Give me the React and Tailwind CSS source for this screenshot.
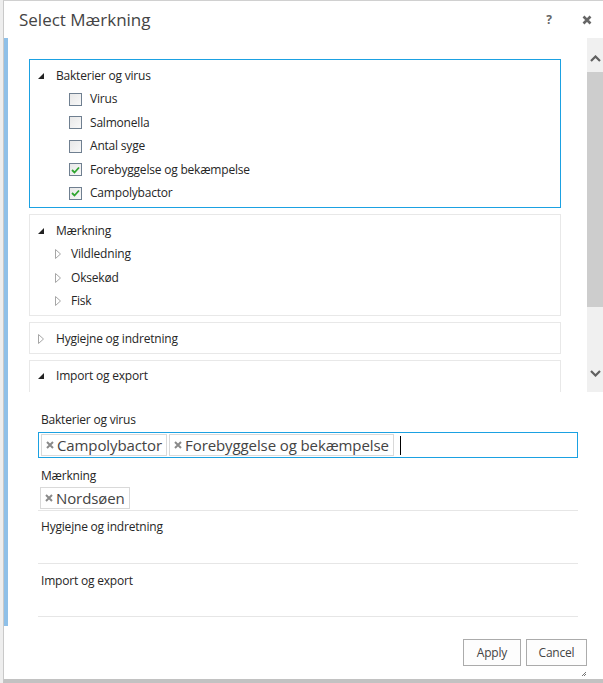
import React from 'react';

const FONT = { fontFamily: '"Open Sans", "Noto Sans", Arial, sans-serif' };

function Expanded() {
    return (
        <svg width="6" height="6" viewBox="0 0 6 6" className="shrink-0">
            <path d="M6 0 L6 6 L0 6 Z" fill="#222" />
        </svg>
    );
}

function Collapsed() {
    return (
        <svg width="6" height="10" viewBox="0 0 6 10" className="shrink-0">
            <path d="M0.5 0.5 L5.5 5 L0.5 9.5 Z" fill="none" stroke="#a6a6a6" strokeWidth="1" />
        </svg>
    );
}

function Checkbox({ checked }) {
    return (
        <span className="w-[13px] h-[13px] shrink-0 border border-[#6f7f90] bg-gradient-to-br from-[#e8e8e8] to-[#f8f8f8] flex items-center justify-center">
            {checked && (
                <svg width="9" height="8" viewBox="0 0 9 8">
                    <path d="M1 4 L3.5 6.5 L8 1.5" fill="none" stroke="#2fa52f" strokeWidth="1.8" />
                </svg>
            )}
        </span>
    );
}

function Tag({ label }) {
    return (
        <span className="h-[22px] flex items-center gap-[3px] px-[4px] border border-[#d9d9d9] text-[15px] tracking-[-0.1px] text-[#444] leading-none">
            <svg width="8" height="8" viewBox="0 0 8 8">
                <path d="M1 1 L7 7 M7 1 L1 7" stroke="#8a8a8a" strokeWidth="2" />
            </svg>
            {label}
        </span>
    );
}

const bacteria = [
    { name: 'Virus', checked: false },
    { name: 'Salmonella', checked: false },
    { name: 'Antal syge', checked: false },
    { name: 'Forebyggelse og bekæmpelse', checked: true },
    { name: 'Campolybactor', checked: true },
];

export default function App() {
    return (
        <div className="w-[603px] h-[683px] flex bg-[#e4e4e4] overflow-hidden relative" style={FONT}>
            <div className="w-[3px] bg-[#eeeeee]" />
            <div className="flex-1 flex flex-col bg-white border-l border-t border-b-[4px] border-l-[#c9c9c9] border-t-[#d0d0d0] border-b-[#c2c2c2] relative">
                {/* page behind, peeking through */}
                <div className="absolute left-0 top-[37px] w-[4px] h-[588px] bg-[#8fc0e8]" />

                {/* title bar */}
                <div className="h-[37px] flex items-center pl-[15px] pr-[8px]">
                    <h1 className="text-[17px] text-[#444] flex-1 pt-[1px]">Select Mærkning</h1>
                    <span className="text-[12px] font-bold text-[#666] mr-[30px]">?</span>
                    <svg width="10" height="10" viewBox="0 0 10 10" className="mr-[3px]">
                        <path d="M1.5 1.5 L8.5 8.5 M8.5 1.5 L1.5 8.5" stroke="#666" strokeWidth="2.6" />
                    </svg>
                </div>

                {/* scrollable tree */}
                <div className="h-[354px] flex">
                    <div className="flex-1 overflow-hidden pl-[25px] pr-[26px] pt-[21px] flex flex-col gap-[6px] text-[12px] tracking-[-0.2px] text-[#262626]">
                        {/* Bakterier og virus */}
                        <section className="border border-[#1ba1e2] pt-[4px] pb-[2px] shrink-0">
                            <div className="h-[23.5px] flex items-center pl-[8px] gap-[12px]">
                                <Expanded />
                                <span>Bakterier og virus</span>
                            </div>
                            {bacteria.map((b) => (
                                <div key={b.name} className="h-[23.5px] flex items-center pl-[39px] gap-[8px]">
                                    <Checkbox checked={b.checked} />
                                    <span>{b.name}</span>
                                </div>
                            ))}
                        </section>

                        {/* Mærkning */}
                        <section className="border border-[#e8e8e8] pt-[4px] pb-[2px] shrink-0">
                            <div className="h-[23.5px] flex items-center pl-[8px] gap-[12px]">
                                <Expanded />
                                <span>Mærkning</span>
                            </div>
                            {['Vildledning', 'Oksekød', 'Fisk'].map((n) => (
                                <div key={n} className="h-[23.5px] flex items-center pl-[25px] gap-[10px]">
                                    <Collapsed />
                                    <span>{n}</span>
                                </div>
                            ))}
                        </section>

                        <section className="border border-[#e8e8e8] pt-[4px] pb-[2px] shrink-0">
                            <div className="h-[23.5px] flex items-center pl-[8px] gap-[12px]">
                                <Collapsed />
                                <span>Hygiejne og indretning</span>
                            </div>
                        </section>

                        <section className="border border-[#e8e8e8] pt-[4px] pb-[2px] shrink-0">
                            <div className="h-[23.5px] flex items-center pl-[8px] gap-[12px]">
                                <Expanded />
                                <span>Import og export</span>
                            </div>
                            <div className="h-[23.5px]" />
                        </section>
                    </div>

                    {/* scrollbar */}
                    <div className="w-[16px] bg-[#f0f0f0] flex flex-col items-center">
                        <div className="h-[34px] flex items-center justify-center pt-[6px]">
                            <svg width="11" height="7" viewBox="0 0 11 7">
                                <path d="M1 6 L5.5 1.5 L10 6" fill="none" stroke="#606060" strokeWidth="2.2" />
                            </svg>
                        </div>
                        <div className="w-full h-[235px] bg-[#cdcdcd]" />
                        <div className="flex-1 flex items-end pb-[15px]">
                            <svg width="11" height="7" viewBox="0 0 11 7">
                                <path d="M1 1 L5.5 5.5 L10 1" fill="none" stroke="#606060" strokeWidth="2.2" />
                            </svg>
                        </div>
                    </div>
                </div>

                {/* selection summary */}
                <div className="pl-[34px] pr-[25px] pt-[18px] text-[12px] tracking-[-0.2px] text-[#262626]">
                    <div className="h-[19px] flex items-center pl-[3px]">Bakterier og virus</div>
                    <div className="h-[26px] mt-[3px] border border-[#1ba1e2] flex items-center gap-[2px] pl-[2px]">
                        <Tag label="Campolybactor" />
                        <Tag label="Forebyggelse og bekæmpelse" />
                        <span className="w-px h-[19px] bg-black ml-[4px]" />
                    </div>

                    <div className="h-[19px] mt-[8px] flex items-center pl-[3px]">Mærkning</div>
                    <div className="flex pt-[2px] pb-[1px] pl-[2px] border-b border-[#e6e6e6]">
                        <Tag label="Nordsøen" />
                    </div>

                    <div className="h-[53px] pt-[7px] pl-[3px] border-b border-[#e6e6e6]">Hygiejne og indretning</div>
                    <div className="h-[53px] pt-[8px] pl-[3px] border-b border-[#e6e6e6]">Import og export</div>

                    <div className="flex justify-end gap-[5px] mt-[22px] mr-[-9px]">
                        <button className="w-[58px] h-[27px] border border-[#ababab] bg-[#fdfdfd] text-[12px] text-[#444]">Apply</button>
                        <button className="w-[61px] h-[27px] border border-[#ababab] bg-[#fdfdfd] text-[12px] text-[#444]">Cancel</button>
                    </div>
                </div>

                {/* resize grip */}
                <svg width="6" height="6" viewBox="0 0 6 6" className="absolute right-[16px] bottom-[2px]">
                    <path d="M5 1 L1 5 M5 3 L3 5" stroke="#777" strokeWidth="1" />
                </svg>
            </div>
        </div>
    );
}
